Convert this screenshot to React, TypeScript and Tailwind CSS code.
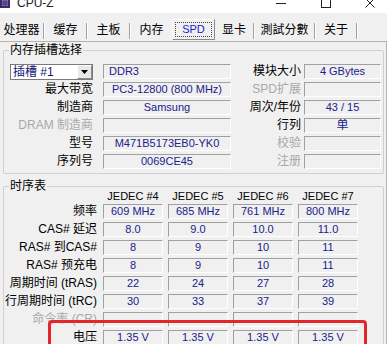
import React from "react";

const FONT = "font-['Liberation_Sans','Noto_Sans_CJK_SC',sans-serif]";

function Field({ children, className = "" }: { children?: React.ReactNode; className?: string }) {
  return (
    <div
      className={`h-[15px] flex items-center border-t border-l border-[#a0a0a0] border-b-white border-r-white border-b border-r text-[11px] leading-[13px] text-[#20208c] whitespace-nowrap overflow-hidden ${className}`}
    >
      {children}
    </div>
  );
}

function Sep() {
  return <div className="self-center h-[16px] w-[2px] border-l border-[#a0a0a0] border-r border-r-white" />;
}

function Tab({ w, children }: { w: string; children: React.ReactNode }) {
  return <div className={`${w} h-[20px] flex items-center justify-center text-[12px] leading-[14px] text-black`}>{children}</div>;
}

function L1({ children, gray = false }: { children: React.ReactNode; gray?: boolean }) {
  return (
    <div className={`w-[89px] text-right text-[12px] leading-[15px] whitespace-nowrap ${gray ? "text-[#a8a8a8]" : "text-black"}`}>
      {children}
    </div>
  );
}

function L2({ children, gray = false }: { children: React.ReactNode; gray?: boolean }) {
  return (
    <div className={`w-[70px] text-right text-[12px] leading-[15px] whitespace-nowrap ${gray ? "text-[#a8a8a8]" : "text-black"}`}>
      {children}
    </div>
  );
}

function TRow({ label, vals, gray = false }: { label: string; vals: string[]; gray?: boolean }) {
  return (
    <div className="flex items-center h-[15px]">
      <div className={`w-[93px] text-right text-[12px] leading-[15px] whitespace-nowrap ${gray ? "text-[#a8a8a8]" : "text-black"}`}>{label}</div>
      <div className="ml-[6px] flex gap-[5px]">
        {vals.map((v, i) => (
          <Field key={i} className="w-[60px] justify-center">
            {v}
          </Field>
        ))}
      </div>
    </div>
  );
}

export default function App() {
  return (
    <div className={`relative w-[387px] h-[344px] overflow-hidden bg-[#f0f0f0] ${FONT}`}>
      {/* title bar */}
      <div className="h-[13px] bg-white overflow-hidden">
        <div className="-mt-[12px] h-[30px] flex items-center">
          <svg width="10" height="10" viewBox="0 0 10 10" className="ml-[0px]">
            <rect x="0" y="0" width="10" height="10" fill="#3a2a6a" />
            <rect x="2" y="2" width="6" height="6" fill="#8a78c8" />
            <path d="M2 4h6M2 6h6M4 2v6M6 2v6" stroke="#3a2a6a" strokeWidth="0.8" />
          </svg>
          <span className="ml-[7px] text-[12px] text-[#222]">CPU-Z</span>
          <div className="ml-auto flex items-center pr-[12px]">
            <div className="w-[10px] h-[1px] bg-[#222]" />
            <div className="ml-[35px] w-[10px] h-[10px] border border-[#222]" />
            <svg width="10" height="10" viewBox="0 0 10 10" className="ml-[34px]">
              <path d="M0.5 0.5L9.5 9.5M9.5 0.5L0.5 9.5" stroke="#222" strokeWidth="1" />
            </svg>
          </div>
        </div>
      </div>

      {/* tabs */}
      <div className="h-[28px] flex items-start pt-[7px]">
        <Tab w="w-[43px]">处理器</Tab>
        <Sep />
        <Tab w="w-[41px]">缓存</Tab>
        <Sep />
        <Tab w="w-[41px]">主板</Tab>
        <Sep />
        <Tab w="w-[41px]">内存</Tab>
        <div className="w-[43px] h-[21px] -mt-[1px] border border-[#a0a0a0] border-t-white border-l-white border-r-[#8a8a8a] border-b-[#8a8a8a] p-[2px]">
          <div className="w-full h-full border border-dotted border-[#444] flex items-center justify-center text-[11px] text-[#2020d0]">
            SPD
          </div>
        </div>
        <Tab w="w-[38px]">显卡</Tab>
        <Sep />
        <Tab w="w-[59px]">測試分數</Tab>
        <Sep />
        <Tab w="w-[40px]">关于</Tab>
        <Sep />
      </div>

      {/* panel */}
      <div className="w-[387px] border-t border-r border-[#b4b4b4] pt-[0px]">
        {/* group 1 */}
        <fieldset className="ml-[3px] mr-[2px] mt-[1px] border border-[#d0d0d0] rounded-[2px] pt-[7px] pb-[4px]">
          <legend className="ml-[5px] px-[1px] text-[12px] leading-[14px] text-black">内存插槽选择</legend>
          <div className="flex flex-col gap-[3px]">
            <div className="flex items-center h-[15px]">
              <div className="w-[89px] flex">
                <div className="ml-[6px] w-[83px] h-[16px] bg-white border border-[#7a7a7a] flex items-center">
                  <span className="ml-[2px] text-[12px] leading-[14px] text-[#14147a] whitespace-nowrap">插槽 #1</span>
                  <div className="ml-auto mr-[0px] w-[15px] h-[14px] bg-[#e8e8e8] border border-white border-r-[#8a8a8a] border-b-[#8a8a8a] flex items-center justify-center">
                    <svg width="7" height="4" viewBox="0 0 7 4">
                      <path d="M0 0H7L3.5 4Z" fill="#000" />
                    </svg>
                  </div>
                </div>
              </div>
              <Field className="ml-[10px] w-[128px] pl-[5px]">DDR3</Field>
              <L2>模块大小</L2>
              <Field className="ml-[3px] w-[77px] justify-center">4 GBytes</Field>
            </div>
            <div className="flex items-center h-[15px]">
              <L1>最大带宽</L1>
              <Field className="ml-[10px] w-[128px] justify-center">PC3-12800 (800 MHz)</Field>
              <L2 gray>SPD扩展</L2>
              <Field className="ml-[3px] w-[77px] justify-center" />
            </div>
            <div className="flex items-center h-[15px]">
              <L1>制造商</L1>
              <Field className="ml-[10px] w-[128px] justify-center">Samsung</Field>
              <L2>周次/年份</L2>
              <Field className="ml-[3px] w-[77px] justify-center">43 / 15</Field>
            </div>
            <div className="flex items-center h-[15px]">
              <L1 gray>DRAM 制造商</L1>
              <Field className="ml-[10px] w-[128px] justify-center" />
              <L2>行列</L2>
              <Field className="ml-[3px] w-[77px] justify-center text-[12px]">单</Field>
            </div>
            <div className="flex items-center h-[15px]">
              <L1>型号</L1>
              <Field className="ml-[10px] w-[128px] justify-center">M471B5173EB0-YK0</Field>
              <L2 gray>校验</L2>
              <Field className="ml-[3px] w-[77px] justify-center" />
            </div>
            <div className="flex items-center h-[15px]">
              <L1>序列号</L1>
              <Field className="ml-[10px] w-[128px] justify-center">0069CE45</Field>
              <L2 gray>注册</L2>
              <Field className="ml-[3px] w-[77px] justify-center" />
            </div>
          </div>
        </fieldset>

        {/* group 2 */}
        <fieldset className="ml-[3px] mr-[2px] mt-[6px] border border-[#d0d0d0] rounded-[2px] pb-[10px]">
          <legend className="ml-[5px] px-[1px] text-[12px] leading-[12px] text-black">时序表</legend>
          <div className="flex h-[9px] mb-[3px] items-center">
            <div className="w-[93px]" />
            <div className="ml-[6px] flex gap-[5px]">
              {["JEDEC #4", "JEDEC #5", "JEDEC #6", "JEDEC #7"].map((h) => (
                <div key={h} className="w-[60px] text-center text-[11px] leading-[9px] text-black whitespace-nowrap">
                  {h}
                </div>
              ))}
            </div>
          </div>
          <div className="flex flex-col gap-[3px]">
            <TRow label="频率" vals={["609 MHz", "685 MHz", "761 MHz", "800 MHz"]} />
            <TRow label="CAS# 延迟" vals={["8.0", "9.0", "10.0", "11.0"]} />
            <TRow label="RAS# 到CAS#" vals={["8", "9", "10", "11"]} />
            <TRow label="RAS# 预充电" vals={["8", "9", "10", "11"]} />
            <TRow label="周期时间 (tRAS)" vals={["22", "24", "27", "28"]} />
            <TRow label="行周期时间 (tRC)" vals={["30", "33", "37", "39"]} />
            <TRow label="命令率 (CR)" vals={["", "", "", ""]} gray />
            <TRow label="电压" vals={["1.35 V", "1.35 V", "1.35 V", "1.35 V"]} />
          </div>
        </fieldset>
      </div>

      {/* red highlight box */}
      <div className="absolute left-[48px] top-[320px] w-[319px] h-[40px] border-[3px] border-[#e3262a] rounded-[4px]" />
    </div>
  );
}
